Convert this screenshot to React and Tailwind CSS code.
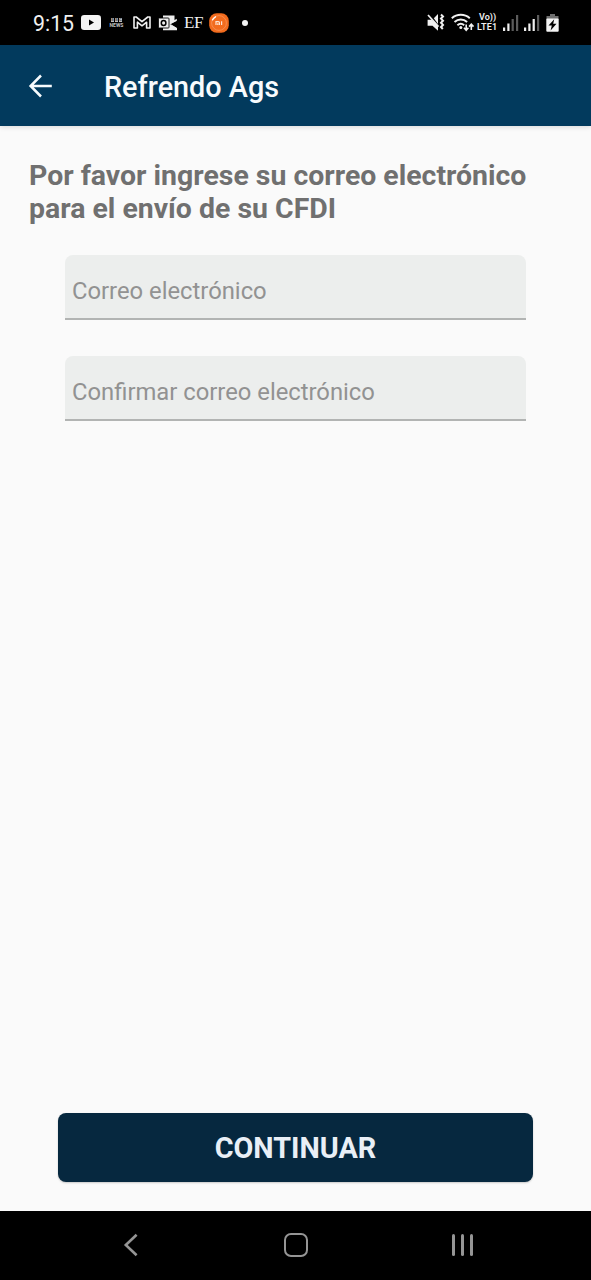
import { useState } from 'react';

const FIELDS = [
  { name: 'email', label: 'Correo electrónico' },
  { name: 'emailConfirm', label: 'Confirmar correo electrónico' }
];

const YoutubeIcon = () => (
  <svg className="w-5 h-[15px]" viewBox="0 0 20 15">
    <rect width="20" height="15" rx="3.2" fill="#f4f4f4" />
    <path d="M8 4.4v6.2l5-3.1z" fill="#000" />
  </svg>
);

const BbcNewsIcon = () => (
  <div className="w-[15px] h-[10px] flex flex-col items-center">
    <div className="flex gap-[0.5px] h-1 shrink-0">
      {['B', 'B', 'C'].map((letter, i) => (
        <span key={i} className="w-[3.5px] h-1 bg-[#bdbdbd] text-[#555] text-[4px] leading-[4px] font-bold text-center">
          {letter}
        </span>
      ))}
    </div>
    <span className="mt-px text-[5px] leading-[5px] font-bold text-[#c4c4c4]">NEWS</span>
  </div>
);

const GmailIcon = () => (
  <svg className="w-[18px] h-[13px]" viewBox="0 0 18 13" fill="none" stroke="#f0f0f0" strokeWidth="1.6" strokeLinejoin="round">
    <path d="M1 12V1h2.2L9 5.6 14.8 1H17v11h-3.4V6.2L9 9.8 4.4 6.2V12z" />
  </svg>
);

const OutlookIcon = () => (
  <svg className="w-5 h-4" viewBox="0 0 20 16">
    <path d="M5 .5h11.5V6L19 4.6v10.7H5z" fill="#eee" />
    <path d="M17.2.5H20v4.2l-2.8 1.4z" fill="#000" />
    <path d="M12.2 9.2l7.8-4v8.6z" fill="#000" />
    <path d="M11.2 8.2l7.6-4.4v1.6l-6.4 3.7 6.4 4v1.8z" fill="#eee" />
    <rect x="0.4" y="3" width="10.6" height="10" rx="0.8" fill="#eee" stroke="#000" strokeWidth="0.9" />
    <ellipse cx="5.6" cy="8" rx="2.3" ry="2.5" fill="none" stroke="#000" strokeWidth="1.5" />
  </svg>
);

const MiIcon = () => (
  <svg className="w-5 h-5" viewBox="0 0 20 20">
    <rect x="0.2" y="0.2" width="19.6" height="19.6" rx="7.5" fill="#f26b1d" />
    <circle cx="10" cy="10" r="7.4" fill="none" stroke="#f79a61" strokeWidth="0.7" />
    <path d="M3.5 6.8a7.2 7.2 0 0 1 3-3" fill="none" stroke="#fff" strokeWidth="1.4" strokeLinecap="round" />
    <path d="M7 12V8.6h2.4q1 0 1 1V12M8.8 10.2V12M12.6 8.3V12" fill="none" stroke="#fde3d2" strokeWidth="1.2" />
  </svg>
);

const VibrateMuteIcon = () => (
  <svg className="w-[18px] h-[19px]" viewBox="0 0 18 19">
    <path d="M0.6 6.8H4.5L11 13v4.8L5.5 12.7H.6z" fill="#f0f0f0" />
    <path d="M11 1v10L6.8 5.3z" fill="#f0f0f0" />
    <path d="M1 2l10.5 11.6" stroke="#f0f0f0" strokeWidth="1.7" />
    <path d="M14 1.5l2 2-2 2.1 2 2.1-2 2.1 2 2.1-2 2.1 1.8 2" fill="none" stroke="#f0f0f0" strokeWidth="2" />
  </svg>
);

const WifiIcon = () => (
  <svg className="w-6 h-[19px]" viewBox="0 0 24 19" fill="none" stroke="#f0f0f0" strokeWidth="2">
    <path d="M.8 5.2a13.5 13.5 0 0 1 18 0" />
    <path d="M3.5 8.9a9.6 9.6 0 0 1 12.6 0" />
    <path d="M6.4 12.2a5.4 5.4 0 0 1 6.8 0" />
    <circle cx="9.8" cy="14.6" r="1.5" fill="#f0f0f0" stroke="none" />
    <path d="M15.2 11.5v5.5M13 14.8l2.2 2.4 2.2-2.4M20.3 17v-5.5M18.1 13.6l2.2-2.4 2.2 2.4" strokeWidth="1.6" />
  </svg>
);

const SignalIcon = ({ bars }) => (
  <svg className="w-4 h-[17px]" viewBox="0 0 16 17">
    <rect x="0" y="13.5" width="2.2" height="3.5" fill="#f0f0f0" />
    <rect x="4.3" y="9.5" width="2.2" height="7.5" fill="#f0f0f0" />
    <rect x="8.6" y="5" width="2.2" height="12" fill={bars > 2 ? '#f0f0f0' : '#5c5c5c'} />
    <rect x="13" y="1" width="2.2" height="16" fill="#5c5c5c" />
  </svg>
);

const BatteryIcon = () => (
  <svg className="w-[13px] h-[18px]" viewBox="0 0 13 18">
    <path d="M4 0h5v2H4zM.5 2h12v3H.5z" fill="#6f6f6f" />
    <rect x="0.3" y="4.6" width="12.4" height="13.2" rx="1" fill="#f4f4f4" />
    <path d="M8.2 5.2L2.5 11.4h3.3l-1.2 5 5.9-6.6H7.2z" fill="#000" />
  </svg>
);

const StatusBar = () => (
  <div className="h-[45px] shrink-0 bg-black text-[#f0f0f0] flex items-center pl-[33px] pr-8">
    <span className="w-[48px] text-[21.3px] leading-none whitespace-nowrap pt-[3px]">9:15</span>
    <YoutubeIcon />
    <div className="ml-2"><BbcNewsIcon /></div>
    <div className="ml-[9px]"><GmailIcon /></div>
    <div className="ml-[7px]"><OutlookIcon /></div>
    <span className="ml-[6px] w-[20px] font-['Liberation_Serif'] text-[17px] leading-none tracking-[-0.5px]">EF</span>
    <div className="ml-[5px]"><MiIcon /></div>
    <div className="ml-[13px] w-[6px] h-[6px] rounded-full bg-[#f4f4f4]" />
    <div className="ml-auto flex items-center">
      <VibrateMuteIcon />
      <div className="ml-[6px]"><WifiIcon /></div>
      <div className="ml-[2px] w-[22px] flex flex-col gap-px whitespace-nowrap font-semibold text-[9px]">
        <span className="pl-[2px] h-[9px] leading-[9px]">Vo))</span>
        <span className="h-[9px] leading-[9px] tracking-[0.2px]">LTE1</span>
      </div>
      <div className="ml-1"><SignalIcon bars={2} /></div>
      <div className="ml-[5px]"><SignalIcon bars={3} /></div>
      <div className="ml-[6px]"><BatteryIcon /></div>
    </div>
  </div>
);

const AppBar = () => (
  <header className="relative h-[81px] shrink-0 bg-[#023a5d] text-[#f7fbfd] flex items-center pl-[28px] shadow-[0_1px_5px_rgba(0,0,0,0.14)]">
    <button type="button" aria-label="Atrás" className="w-6 h-6">
      <svg viewBox="0 0 24 24" fill="none" stroke="currentColor" strokeWidth="2.5">
        <path d="M23.8 12H3M13 1.5L2.6 12 13 22.5" />
      </svg>
    </button>
    <h1 className="ml-[52px] pt-[4px] text-[28.8px] leading-none font-medium whitespace-nowrap">Refrendo Ags</h1>
  </header>
);

const NavigationBar = () => (
  <nav className="h-[69px] shrink-0 bg-black grid grid-cols-[97px_166px_166px_auto] pb-[2px] text-[#959595]">
    <div className="col-start-1" />
    <div className="flex items-center pl-[26px]">
      <svg className="w-[16px] h-[24px]" viewBox="0 0 16 24" fill="none" stroke="currentColor" strokeWidth="2.6">
        <path d="M13.6 1.8L2.8 12l10.8 10.2" />
      </svg>
    </div>
    <div className="flex items-center pl-[21px]">
      <div className="w-6 h-6 border-[2.5px] border-current rounded-[7px]" />
    </div>
    <div className="flex items-center gap-[6px] pl-[23px]">
      <div className="w-[3px] h-[22px] bg-current rounded-full" />
      <div className="w-[3px] h-[22px] bg-current rounded-full" />
      <div className="w-[3px] h-[22px] bg-current rounded-full" />
    </div>
  </nav>
);

const App = () => {
  const [values, setValues] = useState({ email: '', emailConfirm: '' });

  return (
    <div className="w-full h-screen flex flex-col bg-[#fafafa] font-[Roboto,sans-serif] overflow-hidden">
      <StatusBar />
      <AppBar />

      {/* Email form */}
      <main className="flex-1 flex flex-col pt-[33px] pb-[29px]">
        <h2 className="ml-[29px] h-[67px] text-[28.45px] leading-[33px] font-bold text-[#707070] whitespace-nowrap">
          Por favor ingrese su correo electrónico<br />
          para el envío de su CFDI
        </h2>

        <div className="mt-[29px] mx-[65px] flex flex-col gap-9">
          {FIELDS.map((field) => (
            <input
              key={field.name}
              type="text"
              placeholder={field.label}
              value={values[field.name]}
              onChange={(e) => setValues({ ...values, [field.name]: e.target.value })}
              className="w-full h-[65px] pl-[7px] pt-[8px] rounded-t-lg bg-[#eceeed] border-b-2 border-[#b2b4b3] text-[23.8px] text-[#707070] placeholder:text-[#929292] outline-none"
            />
          ))}
        </div>

        <button
          type="button"
          className="mt-auto mx-[58px] h-[69px] pt-[2px] rounded-lg bg-[#06283f] text-[#e9eff6] text-[28.8px] leading-none font-bold shadow-[0_1px_2px_rgba(0,0,0,0.2)]"
        >
          CONTINUAR
        </button>
      </main>

      <NavigationBar />
    </div>
  );
};

export default App;
